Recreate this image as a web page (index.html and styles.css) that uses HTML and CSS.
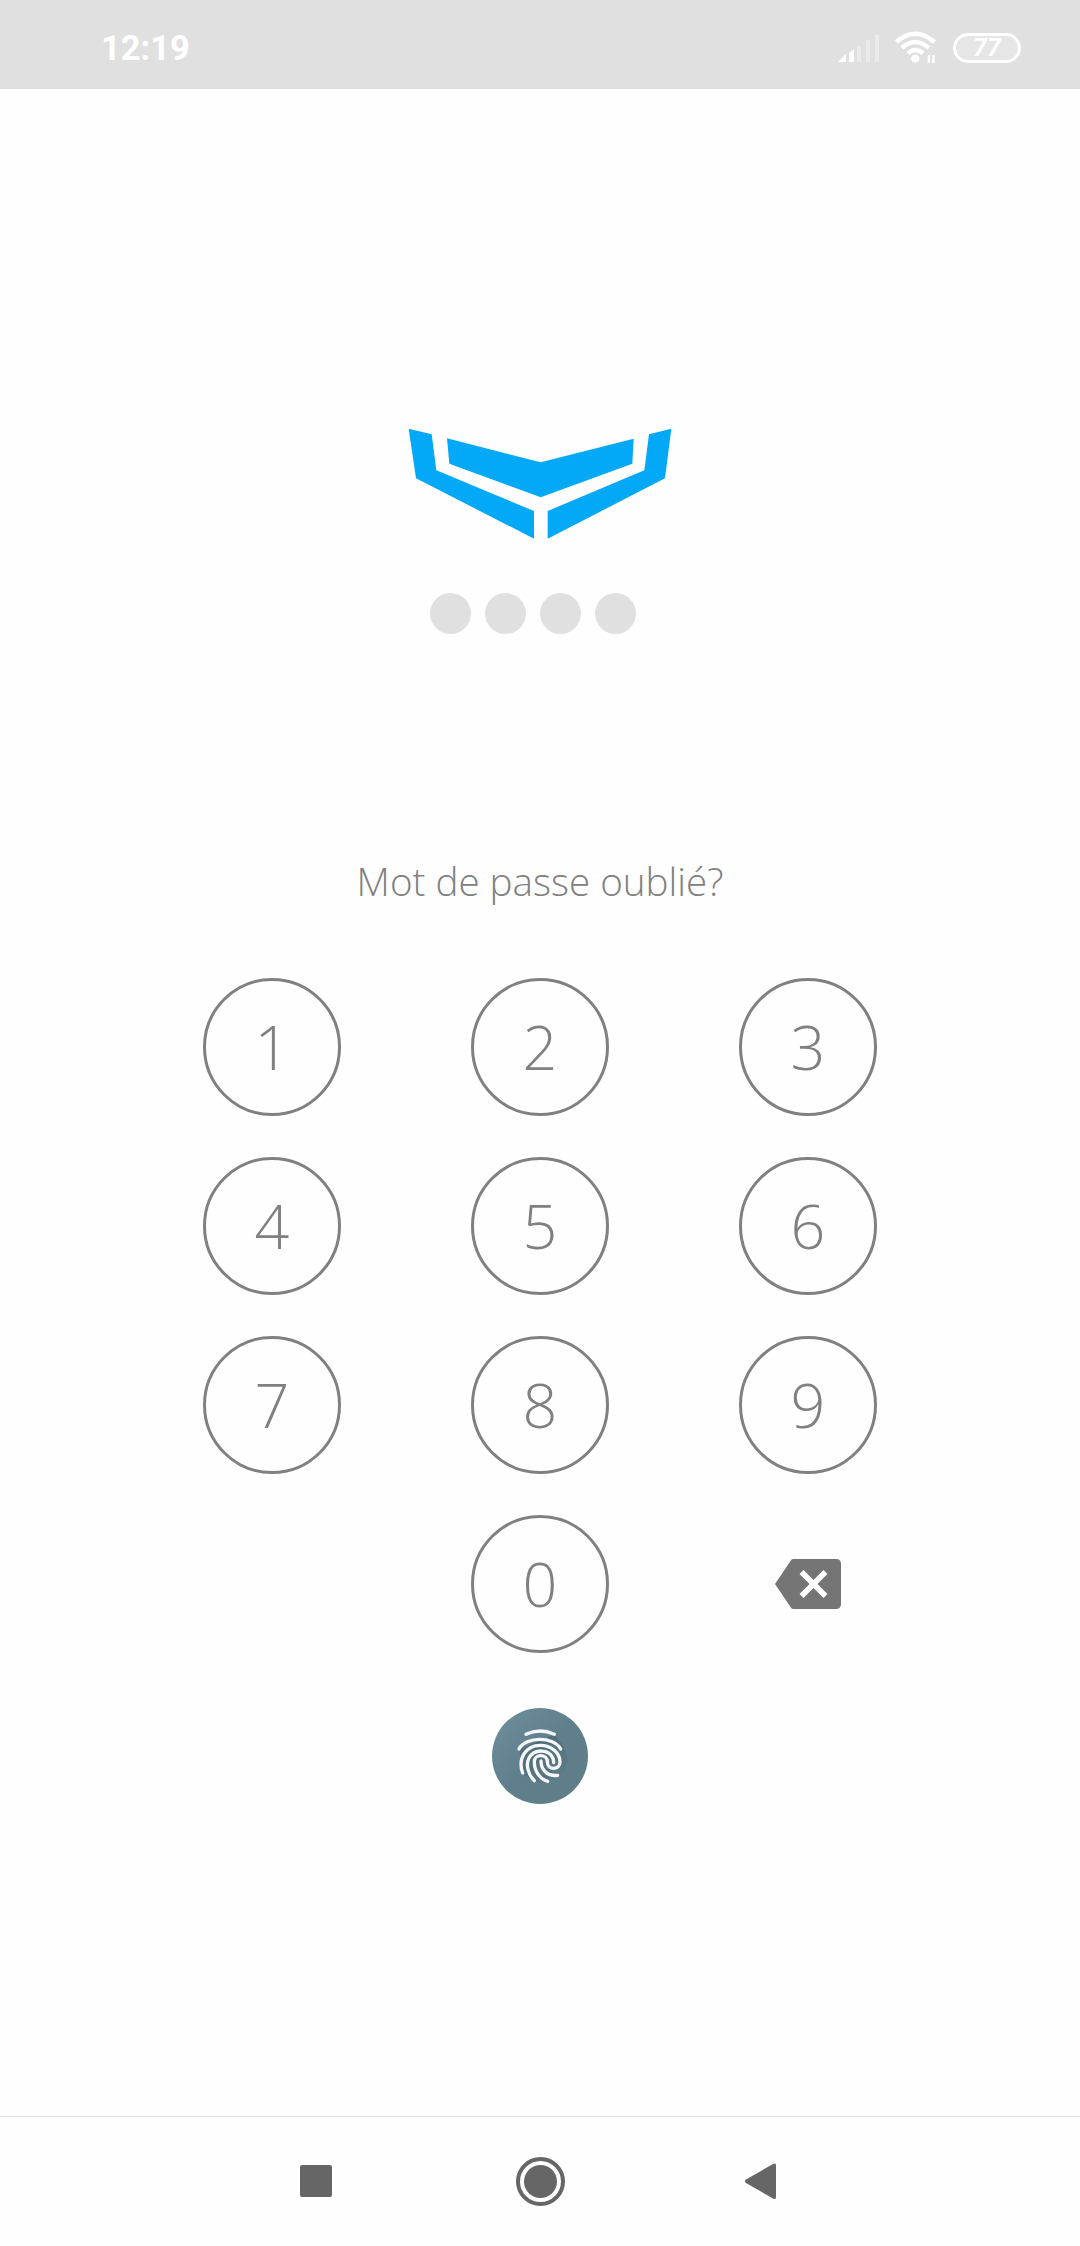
FILE: index.html
```
<!DOCTYPE html>
<html lang="fr">
<head>
  <meta charset="UTF-8">
  <title>Code d'accès</title>
  <link rel="stylesheet" href="styles.css">
</head>
<body>

  <header class="status-bar">
    <span class="clock">12:19</span>
    <div class="status-icons">
      <svg class="signal" viewBox="0 0 42 30">
        <path d="M0 29 L8 21 V29Z M11 20 L16 16 V29 H11Z" fill="#fff"/>
        <path d="M19 13h4v16h-4z M28 7h4v22h-4z M37 2h4v27h-4z" fill="#ebebeb"/>
      </svg>
      <svg class="wifi" viewBox="0 0 42 34">
        <g fill="none" stroke="#fff" stroke-width="4.500">
          <path d="M1.500 11 Q20 -5.500 39.500 11"/>
          <path d="M7 17 Q20 5 34 17"/>
          <path d="M13 22.500 Q20 15.500 28 22.500"/>
        </g>
        <circle cx="20.300" cy="27.500" r="4" fill="#fff"/>
        <path d="M34 24v8M38.500 24v8" stroke="#fff" stroke-width="2.500"/>
      </svg>
      <span class="battery">77</span>
    </div>
  </header>

  <main class="lock-screen">
    <svg class="logo" viewBox="54 54 792 333" fill="#03a9f6">
      <path d="M56 56 L125 73 L139 181 L432 303 V386 L78 205Z"/>
      <path d="M171 85 L452 157 L731 86 L727 161 L452 262 L178 161Z"/>
      <path d="M844 56 L777 73 L763 181 L473 303 V386 L825 205Z"/>
    </svg>

    <div class="pin">
      <span class="dot"></span>
      <span class="dot"></span>
      <span class="dot"></span>
      <span class="dot"></span>
    </div>

    <a class="forgot">Mot de passe oublié?</a>

    <div class="keypad">
      <button class="key">1</button>
      <button class="key">2</button>
      <button class="key">3</button>
      <button class="key">4</button>
      <button class="key">5</button>
      <button class="key">6</button>
      <button class="key">7</button>
      <button class="key">8</button>
      <button class="key">9</button>
      <button class="key zero">0</button>
      <button class="erase" aria-label="Effacer">
        <svg viewBox="0 0 66 50">
          <path d="M18 0 H61 Q66 0 66 5 V45 Q66 50 61 50 H18 Q16.500 50 15.500 48 L0 25 L15.500 2 Q16.500 0 18 0Z" fill="#757575"/>
          <path d="M26.500 13 L50.500 37 M50.500 13 L26.500 37" stroke="#fff" stroke-width="5.500"/>
        </svg>
      </button>
    </div>

    <!-- empreinte digitale -->
    <svg class="fingerprint" viewBox="36 54 288 288">
      <defs>
        <linearGradient id="fond" x1="0" y1="0" x2="1" y2="1">
          <stop offset="0" stop-color="#6f8f9e"/>
          <stop offset="0.500" stop-color="#607f8c"/>
          <stop offset="1" stop-color="#5f7e89"/>
        </linearGradient>
        <linearGradient id="ombre" x1="0" y1="0" x2="1" y2="1">
          <stop offset="0.300" stop-color="#415a63" stop-opacity="0.500"/>
          <stop offset="1" stop-color="#415a63" stop-opacity="0"/>
        </linearGradient>
      </defs>
      <circle cx="180" cy="198" r="144" fill="url(#fond)"/>
      <path d="M223 133 Q270 185 262 225 Q245 280 163 274 L128 250 L118 178Z" fill="url(#ombre)"/>
      <g fill="none" stroke="#f4f8fa" stroke-width="10" stroke-linecap="round">
        <path d="M138 133 Q180 113 223 133"/>
        <path d="M117 177 C138 139 220 138 242 177"/>
        <path d="M128 249 C112 205 138 166 181 166 C214 166 240 189 240 216 C240 241 202 242 202 215 C202 191 163 191 163 215 C163 245 180 267 203 274"/>
        <path d="M163 272 C143 252 137 222 147 204 C163 175 208 177 219 205 Q221 212 221 218"/>
        <path d="M183 213 C183 241 204 260 233 256"/>
      </g>
    </svg>
  </main>

  <nav class="nav-bar">
    <svg viewBox="0 0 50 50"><rect x="9" y="9" width="32" height="32" rx="2"/></svg>
    <svg viewBox="0 0 50 50">
      <circle cx="25.500" cy="25.500" r="16.500"/>
      <circle cx="25.500" cy="25.500" r="22.500" fill="none" stroke="#666" stroke-width="4"/>
    </svg>
    <svg viewBox="0 0 50 50"><path d="M7 23.500 L34 8 Q37 6.500 37 9 V41 Q37 44 34 42.500 L7 27 Q4.500 25.300 7 23.500Z"/></svg>
  </nav>

</body>
</html>
```

FILE: styles.css
```
* {
  box-sizing: border-box;
}

body {
  margin: 0;
  height: 2246px;
  display: flex;
  flex-direction: column;
  background: #fefefe;
  font-family: "Open Sans", sans-serif;
}

svg {
  display: block;
}

.status-bar {
  height: 89px;
  padding: 0 59px 0 101px;
  display: flex;
  align-items: center;
  justify-content: space-between;
  background: #e0e0e0;
  color: #fff;
  font-family: Roboto, sans-serif;
}

.clock {
  font-size: 34.5px;
  font-weight: 700;
  padding-top: 7px;
}

.status-icons {
  display: flex;
  align-items: center;
  padding-top: 6px;
}

.signal {
  width: 42px;
  height: 30px;
  margin-right: 15px;
}

.wifi {
  width: 42px;
  height: 34px;
  margin-right: 16px;
}

.battery {
  width: 68px;
  height: 30px;
  border: 3px solid #fff;
  border-radius: 15px;
  background: #e6e6e6;
  font-size: 25px;
  font-weight: 700;
  font-style: italic;
  line-height: 24px;
  text-align: center;
}

.lock-screen {
  flex: 1;
  padding-top: 339px;
  display: flex;
  flex-direction: column;
  align-items: center;
}

.logo {
  width: 264px;
  height: 111px;
}

.pin {
  display: flex;
  gap: 14px;
  margin-top: 54px;
  margin-right: 14px;
}

.dot {
  width: 41px;
  height: 41px;
  border-radius: 50%;
  background: #e0e0e0;
}

.forgot {
  margin-top: 220px;
  font-size: 38.6px;
  font-weight: 300;
  line-height: 54px;
  color: #808080;
}

.keypad {
  display: grid;
  grid-template-columns: repeat(3, 138px);
  grid-auto-rows: 138px;
  gap: 41px 130px;
  margin-top: 70px;
}

.key {
  padding: 0 0 1px;
  border: 3px solid #808080;
  border-radius: 50%;
  background: none;
  color: #808080;
  font: 300 61px/130px "Open Sans", sans-serif;
}

.zero {
  grid-column: 2;
}

.erase {
  display: flex;
  align-items: center;
  justify-content: center;
  padding: 0;
  border: none;
  background: none;
}

.erase svg {
  width: 66px;
  height: 50px;
}

.fingerprint {
  width: 96px;
  height: 96px;
  margin-top: 55px;
}

.nav-bar {
  height: 130px;
  padding-bottom: 1px;
  border-top: 1px solid #e0e0e0;
  display: flex;
  justify-content: center;
  align-items: center;
  gap: 174px;
}

.nav-bar svg {
  width: 50px;
  height: 50px;
  fill: #666;
}
```
